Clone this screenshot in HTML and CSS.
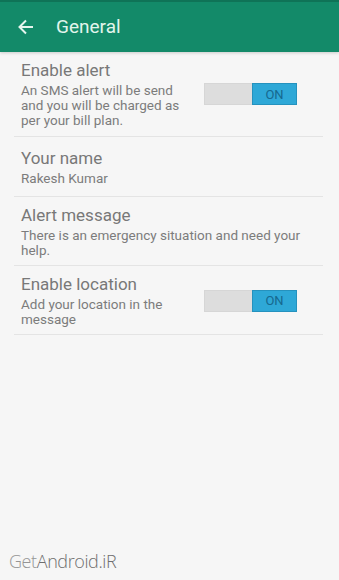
FILE: index.html
```html
<!DOCTYPE html>
<html>
<head>
<meta charset="utf-8">
<link rel="stylesheet" href="styles.css">
</head>
<body>
<header class="appbar">
  <svg class="back" width="16" height="16" viewBox="0 0 16 16">
    <path d="M15 8H2M8 1.5L1.5 8L8 14.5" fill="none" stroke="#e6f5ee" stroke-width="2"/>
  </svg>
  <span class="title">General</span>
</header>
<main class="list">
  <div class="row">
    <div class="text">
      <div class="label">Enable alert</div>
      <div class="sub">An SMS alert will be send and you will be charged as per your bill plan.</div>
    </div>
    <div class="switch"><span class="off"></span><span class="on">ON</span></div>
  </div>
  <div class="row">
    <div class="text">
      <div class="label">Your name</div>
      <div class="sub">Rakesh Kumar</div>
    </div>
  </div>
  <div class="row">
    <div class="text">
      <div class="label">Alert message</div>
      <div class="sub">There is an emergency situation and need your help.</div>
    </div>
  </div>
  <div class="row">
    <div class="text">
      <div class="label">Enable location</div>
      <div class="sub">Add your location in the message</div>
    </div>
    <div class="switch"><span class="off"></span><span class="on">ON</span></div>
  </div>
</main>
<div class="watermark"><span class="get">Get</span>Android.iR</div>
</body>
</html>
```
FILE: styles.css
```css
html, body {
  margin: 0;
  padding: 0;
}
body {
  width: 339px;
  height: 580px;
  background: #f6f6f6;
  font-family: Roboto, "Noto Sans", sans-serif;
  position: relative;
  overflow: hidden;
}
.appbar {
  height: 50px;
  border-top: 2px solid #0f7357;
  background: #138a69;
  display: flex;
  align-items: center;
  box-shadow: 0 1px 3px rgba(0,0,0,0.18);
  position: relative;
  z-index: 1;
}
.back {
  margin-left: 18px;
  margin-top: -1px;
}
.title {
  margin-left: 22px;
  font-size: 19px;
  color: #e2f5ec;
  margin-top: -1px;
}
.list {
  margin: 0 16px 0 14px;
}
.row {
  display: flex;
  align-items: center;
  min-height: 60px;
  box-sizing: border-box;
  padding: 8px 0 7px 7px;
  border-bottom: 1px solid #e4e4e4;
}
.row:first-child {
  padding-bottom: 8px;
}
.text {
  flex: 1;
}
.label {
  font-size: 17px;
  line-height: 20px;
  color: #787878;
}
.sub {
  margin-top: 3px;
  font-size: 13.5px;
  line-height: 15px;
  color: #7c7c7c;
}
.switch {
  display: flex;
  width: 93px;
  height: 22px;
  margin-left: 14px;
  margin-right: 26px;
  flex-shrink: 0;
}
.off {
  width: 48px;
  background: #dddddd;
  border: 1px solid #d6d6d6;
  border-right: none;
  box-sizing: border-box;
}
.on {
  flex: 1;
  background: #2ea8d7;
  border: 1px solid #2592be;
  box-sizing: border-box;
  color: #16698f;
  font-size: 13px;
  display: flex;
  align-items: center;
  justify-content: center;
}
.watermark {
  position: absolute;
  left: 9px;
  top: 549px;
  font-family: "Open Sans", sans-serif;
  font-weight: 300;
  font-size: 18px;
  letter-spacing: -0.4px;
  color: #6e6e6e;
}
.get {
  color: #959595;
}
```
